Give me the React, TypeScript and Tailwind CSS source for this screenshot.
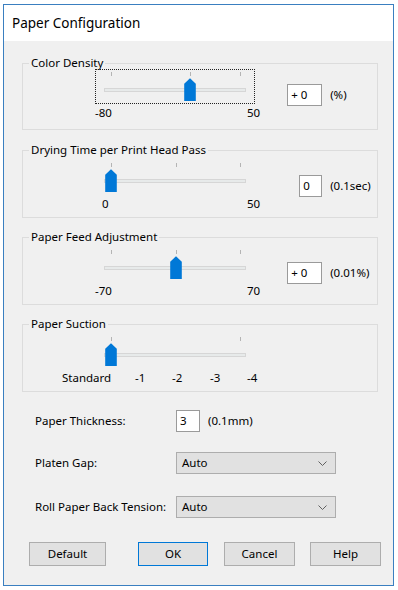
import type { ReactNode } from "react";

// trackbar: thumb centres run from x=16 to x=145 inside the 160px box
function Slider({
  min,
  max,
  value,
  ticks,
  focused = false,
}: {
  min: number;
  max: number;
  value: number;
  ticks: number[];
  focused?: boolean;
}) {
  const pos = (v: number) => 16 + Math.round((129 * (v - min)) / (max - min));
  return (
    <div className="relative h-[35px] w-[160px]">
      {focused && <div className="absolute inset-0 border border-dotted border-[#222]" />}
      {ticks.map((t) => (
        <span key={t} className="absolute top-[3px] h-[4px] w-px bg-[#b4b4b4]" style={{ left: pos(t) }} />
      ))}
      <div className="absolute left-[9px] top-[19px] h-[4px] w-[142px] border border-[#d6d6d6] bg-[#e7eaea]" />
      <svg
        className="absolute top-[9px]"
        style={{ left: pos(value) - 6 }}
        width="12"
        height="23"
        viewBox="0 0 12 23"
      >
        <path d="M6 0.3 L11.8 5.8 V23 H0.2 V5.8 Z" fill="#0078d7" />
      </svg>
    </div>
  );
}

function Group({ title, className, children }: { title: string; className: string; children: ReactNode }) {
  return (
    <div className={`relative ml-[18px] w-[356px] border border-[#dcdcdc] ${className}`}>
      <span className="absolute -top-[8px] left-[6px] bg-[#f0f0f0] px-[2px] leading-[14px]">{title}</span>
      {children}
    </div>
  );
}

function Edit({ value, width }: { value: string; width: string }) {
  return (
    <div className={`flex h-[22px] items-center border border-[#9a9a9a] bg-white pl-[3px] leading-[14px] ${width}`}>
      {value}
    </div>
  );
}

function ValueBox({ value, unit, width }: { value: string; unit: string; width: string }) {
  return (
    <div className="ml-[27px] mt-[15px] flex h-[22px] items-center">
      <div className="flex w-[35px] justify-end">
        <Edit value={value} width={width} />
      </div>
      <span className="ml-[8px] leading-[14px]">{unit}</span>
    </div>
  );
}

function Combo({ value }: { value: string }) {
  return (
    <div className="flex h-[22px] w-[160px] items-center justify-between border border-[#adadad] bg-[#e1e1e1] pl-[5px] pr-[8px] leading-[14px]">
      <span>{value}</span>
      <svg width="9" height="5" viewBox="0 0 9 5">
        <polyline points="0.5,0.5 4.5,4.5 8.5,0.5" fill="none" stroke="#606060" strokeWidth="1" />
      </svg>
    </div>
  );
}

function Button({ label, className }: { label: string; className: string }) {
  return (
    <div className={`flex h-[24px] items-center justify-center border bg-[#e1e1e1] leading-[14px] ${className}`}>
      {label}
    </div>
  );
}

export default function App() {
  return (
    <div className="h-[590px] w-[398px] bg-white pl-[3px] pt-[4px] font-['Noto_Sans','Open_Sans',sans-serif] text-[11.5px] text-black">
      <div className="flex h-[582px] w-[391px] flex-col border border-[#3a7fc0]">
        {/* title bar */}
        <div className="flex h-[36px] items-center bg-white pl-[8px] text-[13.5px]">Paper Configuration</div>

        <div className="flex-1 bg-[#f0f0f0] pt-[22px]">
          <Group title="Color Density" className="h-[67px] pt-[5px]">
            <div className="flex pl-[72px]">
              <div>
                <Slider min={-80} max={50} value={0} ticks={[-80, 0, 50]} focused />
                <div className="mt-[2px] flex leading-[14px]">
                  <span className="w-[152px]">-80</span>
                  <span>50</span>
                </div>
              </div>
              <ValueBox value="+ 0" unit="(%)" width="w-[35px]" />
            </div>
          </Group>

          <Group title="Drying Time per Print Head Pass" className="mt-[20px] h-[68px] pt-[9px]">
            <div className="flex pl-[72px]">
              <div>
                <Slider min={0} max={50} value={0} ticks={[0, 25, 50]} />
                <div className="mt-[2px] flex pl-[7px] leading-[14px]">
                  <span className="w-[145px]">0</span>
                  <span>50</span>
                </div>
              </div>
              <ValueBox value="0" unit="(0.1sec)" width="w-[23px]" />
            </div>
          </Group>

          <Group title="Paper Feed Adjustment" className="mt-[19px] h-[68px] pt-[9px]">
            <div className="flex pl-[72px]">
              <div>
                <Slider min={-70} max={70} value={0} ticks={[-70, 0, 70]} />
                <div className="mt-[2px] flex leading-[14px]">
                  <span className="w-[152px]">-70</span>
                  <span>70</span>
                </div>
              </div>
              <ValueBox value="+ 0" unit="(0.01%)" width="w-[35px]" />
            </div>
          </Group>

          <Group title="Paper Suction" className="mt-[19px] h-[68px] pt-[9px]">
            <div className="flex pl-[72px]">
              <div>
                <Slider min={0} max={4} value={0} ticks={[0, 4]} />
                <div className="-ml-[33px] mt-[2px] flex leading-[14px]">
                  <span className="w-[73px]">Standard</span>
                  <span className="w-[37px]">-1</span>
                  <span className="w-[38px]">-2</span>
                  <span className="w-[37px]">-3</span>
                  <span>-4</span>
                </div>
              </div>
            </div>
          </Group>

          <div className="mt-[18px] flex h-[22px] items-center pl-[31px]">
            <span className="w-[141px] leading-[14px]">Paper Thickness:</span>
            <Edit value="3" width="w-[24px]" />
            <span className="ml-[8px] leading-[14px]">(0.1mm)</span>
          </div>

          <div className="mt-[20px] flex h-[22px] items-center pl-[31px]">
            <span className="w-[141px] leading-[14px]">Platen Gap:</span>
            <Combo value="Auto" />
          </div>

          <div className="mt-[22px] flex h-[22px] items-center pl-[31px]">
            <span className="w-[141px] leading-[14px]">Roll Paper Back Tension:</span>
            <Combo value="Auto" />
          </div>

          <div className="mt-[24px] flex pl-[25px]">
            <Button label="Default" className="w-[77px] border-[#adadad]" />
            <Button label="OK" className="ml-[32px] w-[70px] border-[#0078d7]" />
            <Button label="Cancel" className="ml-[16px] w-[71px] border-[#adadad]" />
            <Button label="Help" className="ml-[15px] w-[71px] border-[#adadad]" />
          </div>
        </div>
      </div>
    </div>
  );
}
